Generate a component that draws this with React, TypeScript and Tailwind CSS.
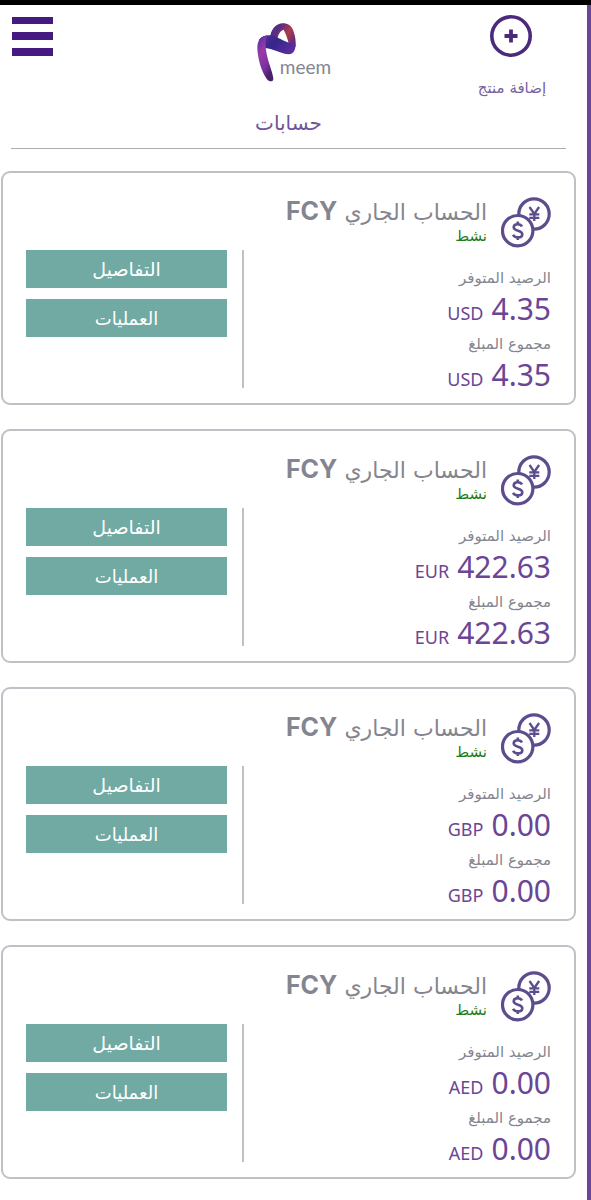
const accounts = [
  { currency: "USD", available: "4.35", total: "4.35" },
  { currency: "EUR", available: "422.63", total: "422.63" },
  { currency: "GBP", available: "0.00", total: "0.00" },
  { currency: "AED", available: "0.00", total: "0.00" },
];

function Logo() {
  return (
    <svg width="41" height="61" viewBox="78 64 123 183">
      <defs>
        <linearGradient id="tail" x1="0" y1="0" x2="0.5" y2="1">
          <stop offset="0" stopColor="#4b2f9c" />
          <stop offset="0.4" stopColor="#9a3aa8" />
          <stop offset="0.75" stopColor="#7a32a0" />
          <stop offset="1" stopColor="#4a2069" />
        </linearGradient>
        <linearGradient id="loop" x1="0" y1="0" x2="1" y2="0.6">
          <stop offset="0" stopColor="#4b2a9a" />
          <stop offset="0.35" stopColor="#5b2d80" />
          <stop offset="0.7" stopColor="#ad3d4c" />
          <stop offset="1" stopColor="#6b2a7a" />
        </linearGradient>
        <linearGradient id="band" x1="0" y1="0" x2="1" y2="0.5">
          <stop offset="0" stopColor="#5c2f9c" />
          <stop offset="0.5" stopColor="#35268c" />
          <stop offset="1" stopColor="#5a2c9c" />
        </linearGradient>
      </defs>
      <path
        d="M120 112C122 88 136 70 156 68C172 67 184 74 190 90C196 106 198 122 197 138L178 138C174 116 168 100 161 87C151 90 145 100 142 116Z"
        fill="url(#loop)"
      />
      <path
        d="M86 118C98 102 122 101 138 108C156 117 174 128 196 130C198 148 190 160 176 161C154 160 130 144 106 142Z"
        fill="url(#band)"
      />
      <path
        d="M112 104C96 106 83 116 82 140C82 174 96 216 110 234C118 245 130 244 130 234C129 216 112 180 108 148C106 132 106 118 112 104Z"
        fill="url(#tail)"
      />
    </svg>
  );
}

function AddIcon() {
  return (
    <svg width="42" height="42" viewBox="0 0 42 42" fill="none" stroke="#4b2a7d">
      <circle cx="21" cy="21" r="19.2" strokeWidth="3.6" />
      <path d="M21 14.5v13M14.5 21h13" strokeWidth="3.8" />
    </svg>
  );
}

function CoinsIcon() {
  return (
    <svg width="50" height="51" viewBox="0 0 50 51" fill="none" stroke="#5d4d8c">
      <circle cx="33" cy="17" r="15.2" strokeWidth="3.2" />
      <path d="M28.5 10l4.8 7 4.8-7M33.3 16.5v7.5M28.3 17.3h10M28.3 20.8h10" strokeWidth="2.3" />
      <circle cx="16.7" cy="33.7" r="15.2" fill="#fff" strokeWidth="3.2" />
      <path
        d="M21 29.5c-.8-1.6-2.2-2.3-4.2-2.3-2.4 0-4.1 1.1-4.1 3.1 0 4.6 8.6 2.1 8.6 6.9 0 2-1.8 3.2-4.4 3.2-2.3 0-4-.9-4.8-2.7M16.8 24.5v3M16.8 40v3"
        strokeWidth="2.6"
      />
    </svg>
  );
}

function Balance({ label, amount, currency }: { label: string; amount: string; currency: string }) {
  return (
    <div className="flex flex-col items-end">
      <div dir="rtl" className="h-[27px] text-[15px] leading-[29px] text-[#85858f]">
        {label}
      </div>
      <div className="flex h-[39px] items-baseline gap-2 font-['Noto_Sans'] leading-9 text-[#6b4596]">
        <span className="text-[18px]">{currency}</span>
        <span className="text-[30px]">{amount}</span>
      </div>
    </div>
  );
}

function AccountCard({ account }: { account: (typeof accounts)[number] }) {
  return (
    <div className="flex h-[234px] rounded-[9px] border-2 border-[#c0c1c6] px-[23px]">
      <div className="flex w-[201px] flex-col gap-[11px] pt-[77px] text-[18px] text-white">
        <button dir="rtl" className="h-[38px] bg-[#70aaa3] text-[19px]">
          التفاصيل
        </button>
        <button dir="rtl" className="h-[38px] bg-[#70aaa3]">
          العمليات
        </button>
      </div>
      <div className="ml-[15px] mt-[77px] h-[138px] w-[2px] bg-[#c0c1c6]"></div>
      <div className="flex flex-1 flex-col pt-6">
        <div className="flex h-[51px] justify-end gap-[14px]">
          <div className="flex flex-col items-end">
            <div dir="rtl" className="flex h-[29px] items-baseline gap-[7px] whitespace-nowrap leading-[29px] text-[#85858f]">
              <span className="text-[22px]">الحساب الجاري</span>
              <span className="font-['Inter'] text-[25px] font-bold">FCY</span>
            </div>
            <div dir="rtl" className="h-[21px] text-[15px] leading-[21px] text-[#1c7c20]">
              نشط
            </div>
          </div>
          <CoinsIcon />
        </div>
        <div className="mt-4">
          <Balance label="الرصيد المتوفر" amount={account.available} currency={account.currency} />
          <Balance label="مجموع المبلغ" amount={account.total} currency={account.currency} />
        </div>
      </div>
    </div>
  );
}

export default function App() {
  return (
    <div className="h-[1200px] w-[591px] overflow-hidden bg-white font-['DejaVu_Sans',sans-serif]">
      <div className="h-[5px] bg-black"></div>
      <div className="h-[1195px] border-r-4 border-[#6b4596]">
        <header className="ml-[11px] mr-[21px] h-[144px] border-b border-[#adadb0]">
          <div className="flex h-[100px] justify-between">
            <div className="flex w-[100px] flex-col gap-[8px] pl-px pt-3">
              <div className="h-[7px] w-[41px] bg-[#451a80]"></div>
              <div className="h-[8px] w-[41px] bg-[#451a80]"></div>
              <div className="h-[8px] w-[41px] bg-[#451a80]"></div>
            </div>
            <div className="flex items-start pl-[20px] pt-[17px]">
              <Logo />
              <span className="-ml-[17px] mt-[31px] font-['Lato'] text-[19px] leading-7 text-[#85858f]">meem</span>
            </div>
            <div className="flex w-[110px] flex-col items-center pt-[10px]">
              <AddIcon />
              <div dir="rtl" className="ml-0.5 mt-[19px] text-[15px] leading-6 text-[#75639f]">
                إضافة منتج
              </div>
            </div>
          </div>
          <div dir="rtl" className="text-center text-[20px] leading-9 text-[#6f5599]">
            حسابات
          </div>
        </header>
        <main className="ml-px mr-[11px] mt-[22px] flex flex-col gap-6">
          {accounts.map((account) => (
            <AccountCard key={account.currency} account={account} />
          ))}
        </main>
      </div>
    </div>
  );
}
